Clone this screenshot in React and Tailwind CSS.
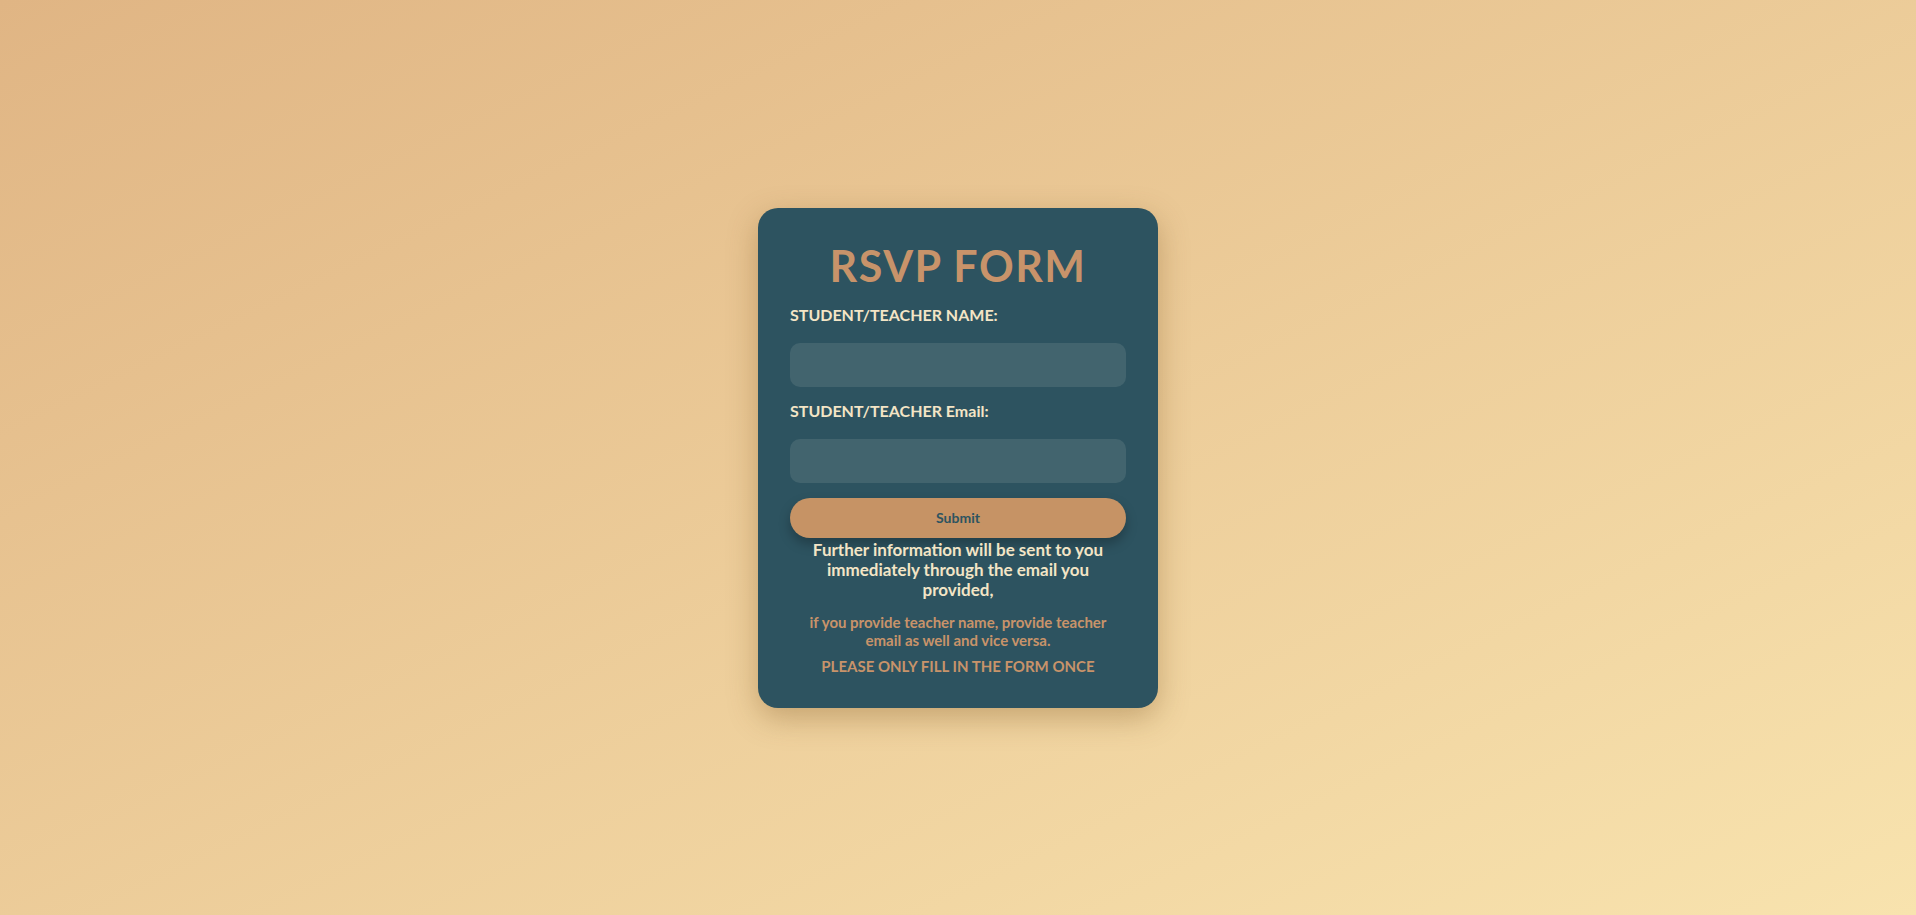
import React from "react";

const App = () => {
  return (
    <div className="min-h-screen w-full flex items-center justify-center bg-gradient-to-br from-[#e0b584] to-[#f8e3ae] font-['Lato','Liberation_Sans',sans-serif]">
      <div className="w-[400px] bg-[#2d5360] rounded-[20px] px-8 pt-[28px] pb-[33px] shadow-[0_10px_30px_rgba(120,80,30,0.35)]">
        <h1 className="text-center text-[43px] leading-[60px] font-bold tracking-[1.5px] text-[#c8936a] mb-[9px]">
          RSVP FORM
        </h1>
        <form onSubmit={(e) => e.preventDefault()} className="flex flex-col">
          <label className="text-[16px] font-bold text-[#f3e5c6] leading-[20px]">
            STUDENT/TEACHER NAME:
          </label>
          <input
            type="text"
            className="mt-[18px] h-[44px] w-full rounded-[10px] bg-[#42646e] outline-none border-0 text-[#f3e5c6] px-3"
          />
          <label className="mt-[14px] text-[16px] font-bold text-[#f3e5c6] leading-[20px]">
            STUDENT/TEACHER Email:
          </label>
          <input
            type="email"
            className="mt-[18px] h-[44px] w-full rounded-[10px] bg-[#42646e] outline-none border-0 text-[#f3e5c6] px-3"
          />
          <button
            type="submit"
            className="mt-[15px] h-[40px] w-full rounded-full bg-[#c69365] text-[#2d5360] text-[14px] font-bold shadow-[0_6px_12px_rgba(0,0,0,0.25)]"
          >
            Submit
          </button>
        </form>
        <p className="mt-[2px] text-center text-[17px] leading-[20px] font-bold text-[#f3e5c6] px-3">
          Further information will be sent to you immediately through the email you provided,
        </p>
        <p className="mt-[13px] text-center text-[15px] leading-[18px] font-bold text-[#c8936a] px-3">
          if you provide teacher name, provide teacher email as well and vice versa.
        </p>
        <p className="mt-[8px] text-center text-[15px] leading-[18px] font-bold text-[#c8936a]">
          PLEASE ONLY FILL IN THE FORM ONCE
        </p>
      </div>
    </div>
  );
};

export default App;
